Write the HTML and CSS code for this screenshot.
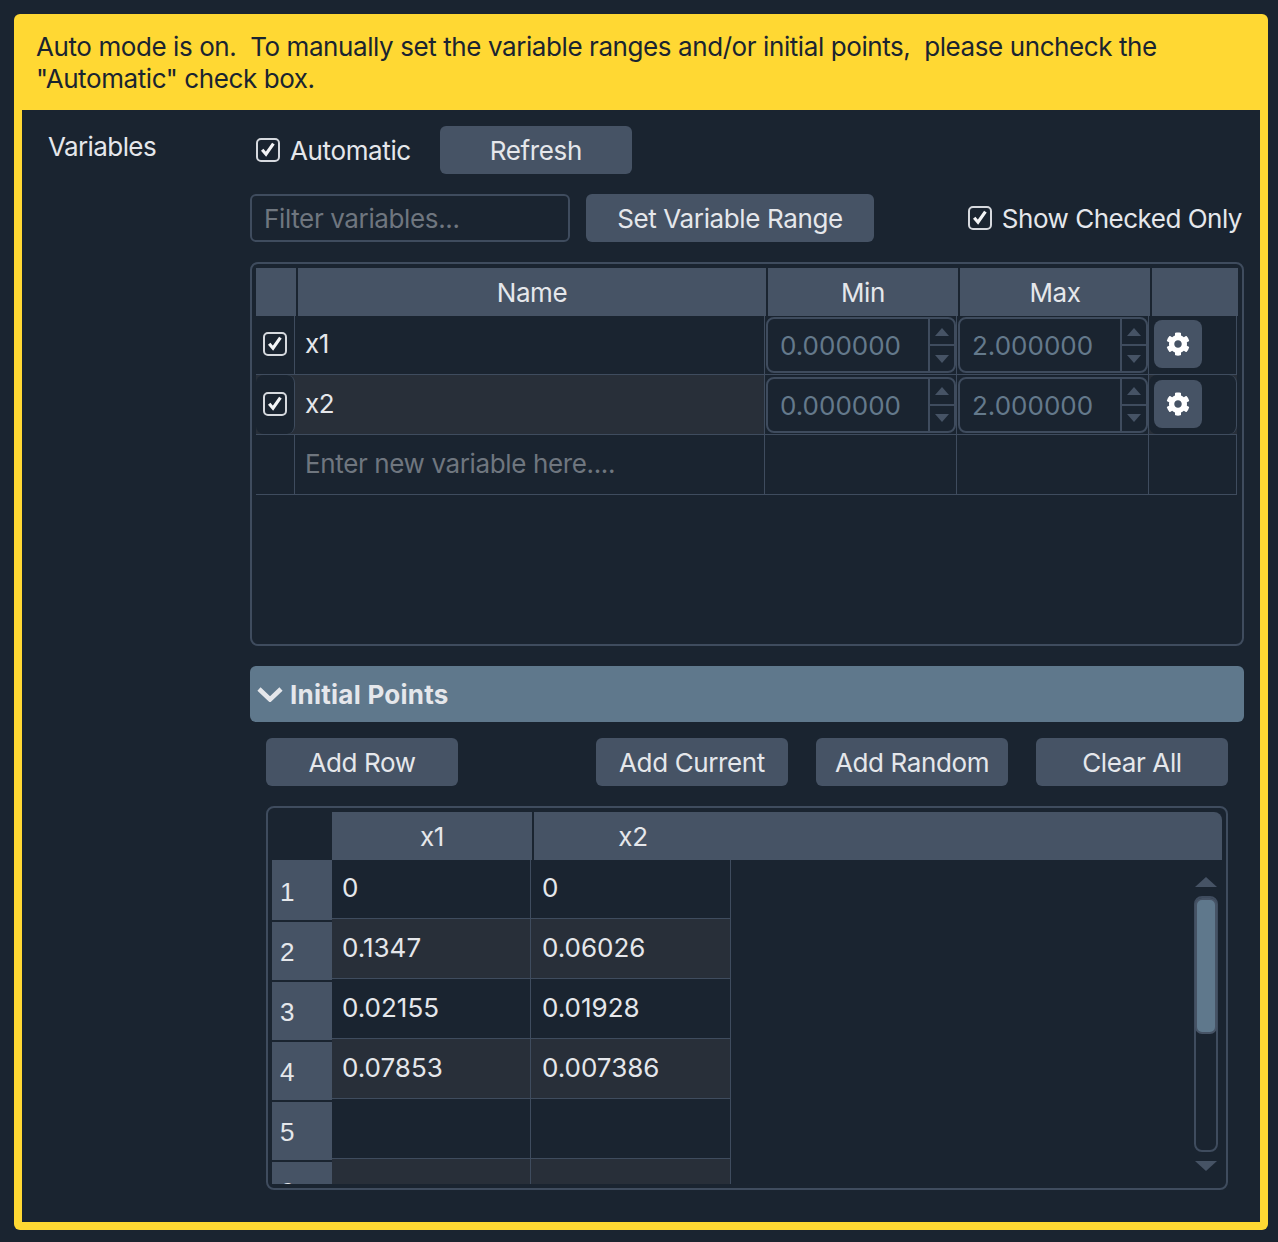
FILE: index.html
```html
<!DOCTYPE html>
<html lang="en">
<head>
  <meta charset="UTF-8">
  <title>Variables</title>
  <link rel="stylesheet" href="styles.css">
</head>
<body>
  <svg class="defs" width="0" height="0">
    <symbol id="tick" viewBox="0 0 20 20">
      <path d="M4.2 9.8L8 14.2 15.4 3.6" fill="none" stroke="#f3f4f6" stroke-width="3.2"/>
    </symbol>
    <symbol id="cog" viewBox="0 0 512 512">
      <path fill="#fff" d="M487.4 315.7l-42.6-24.6c4.3-23.2 4.3-47 0-70.2l42.6-24.6c4.9-2.8 7.1-8.6 5.5-14-11.1-35.6-30-67.8-54.7-94.6-3.8-4.1-10-5.1-14.8-2.3L380.8 110c-17.9-15.4-38.5-27.3-60.8-35.1V25.8c0-5.6-3.9-10.5-9.4-11.7-36.7-8.2-74.3-7.8-109.2 0-5.5 1.2-9.4 6.1-9.4 11.7V75c-22.2 7.9-42.8 19.8-60.8 35.1L88.7 85.5c-4.9-2.8-11-1.9-14.8 2.3-24.7 26.7-43.6 58.9-54.7 94.6-1.7 5.4.6 11.2 5.5 14L67.3 221c-4.3 23.2-4.3 47 0 70.2l-42.6 24.6c-4.9 2.8-7.1 8.6-5.5 14 11.1 35.6 30 67.8 54.7 94.6 3.8 4.1 10 5.1 14.8 2.3l42.6-24.6c17.9 15.4 38.5 27.3 60.8 35.1v49.2c0 5.6 3.9 10.5 9.4 11.7 36.7 8.2 74.3 7.8 109.2 0 5.5-1.2 9.4-6.1 9.4-11.7v-49.2c22.2-7.9 42.8-19.8 60.8-35.1l42.6 24.6c4.9 2.8 11 1.9 14.8-2.3 24.7-26.7 43.6-58.9 54.7-94.6 1.5-5.5-.7-11.3-5.6-14.1zM256 336c-44.1 0-80-35.9-80-80s35.9-80 80-80 80 35.9 80 80-35.9 80-80 80z"/>
    </symbol>
  </svg>

  <div class="panel">
    <div class="notice">Auto mode is on.  To manually set the variable ranges and/or initial points,  please uncheck the
"Automatic" check box.</div>

    <div class="content">
      <div class="side-label">Variables</div>

      <div class="main">
        <div class="row-auto">
          <label class="check"><span class="box"><svg><use href="#tick"/></svg></span>Automatic</label>
          <button class="btn btn-refresh">Refresh</button>
        </div>

        <div class="row-filter">
          <input class="filter" type="text" placeholder="Filter variables...">
          <button class="btn btn-range">Set Variable Range</button>
          <label class="check check-right"><span class="box"><svg><use href="#tick"/></svg></span>Show Checked Only</label>
        </div>

        <div class="var-table">
          <div class="var-head">
            <div class="hcell"></div>
            <div class="hcell">Name</div>
            <div class="hcell">Min</div>
            <div class="hcell">Max</div>
            <div class="hcell"></div>
          </div>

          <div class="var-row">
            <div class="vcell vcell-check"><span class="box"><svg><use href="#tick"/></svg></span></div>
            <div class="vcell vcell-name">x1</div>
            <div class="vcell vcell-spin">
              <div class="spin"><span class="spin-val">0.000000</span><span class="spin-btns"><i class="up"></i><i class="down"></i></span></div>
            </div>
            <div class="vcell vcell-spin">
              <div class="spin"><span class="spin-val">2.000000</span><span class="spin-btns"><i class="up"></i><i class="down"></i></span></div>
            </div>
            <div class="vcell vcell-gear"><button class="gear"><svg><use href="#cog"/></svg></button></div>
          </div>

          <div class="var-row var-row-alt">
            <div class="vcell vcell-check"><span class="box"><svg><use href="#tick"/></svg></span></div>
            <div class="vcell vcell-name">x2</div>
            <div class="vcell vcell-spin">
              <div class="spin"><span class="spin-val">0.000000</span><span class="spin-btns"><i class="up"></i><i class="down"></i></span></div>
            </div>
            <div class="vcell vcell-spin">
              <div class="spin"><span class="spin-val">2.000000</span><span class="spin-btns"><i class="up"></i><i class="down"></i></span></div>
            </div>
            <div class="vcell vcell-gear"><button class="gear"><svg><use href="#cog"/></svg></button></div>
          </div>

          <div class="var-row">
            <div class="vcell"></div>
            <div class="vcell vcell-name vcell-new">Enter new variable here....</div>
            <div class="vcell"></div>
            <div class="vcell"></div>
            <div class="vcell"></div>
          </div>
        </div>

        <div class="section-bar">
          <svg class="chevron" viewBox="0 0 26 16"><path d="M2 3l11 10.5L24 3" fill="none" stroke="#e5e7eb" stroke-width="4.6"/></svg>
          <span>Initial Points</span>
        </div>

        <div class="points">
          <div class="row-points">
            <button class="btn btn-point">Add Row</button>
            <div class="points-right">
              <button class="btn btn-point">Add Current</button>
              <button class="btn btn-point">Add Random</button>
              <button class="btn btn-point">Clear All</button>
            </div>
          </div>

          <div class="pt-table">
            <div class="pt-head">
              <div class="pt-corner"></div>
              <div class="hcell">x1</div>
              <div class="hcell hcell-x2">x2</div>
            </div>
            <div class="pt-body">
              <div class="pt-row"><div class="pt-num">1</div><div class="pt-cell">0</div><div class="pt-cell">0</div></div>
              <div class="pt-row pt-row-alt"><div class="pt-num">2</div><div class="pt-cell">0.1347</div><div class="pt-cell">0.06026</div></div>
              <div class="pt-row"><div class="pt-num">3</div><div class="pt-cell">0.02155</div><div class="pt-cell">0.01928</div></div>
              <div class="pt-row pt-row-alt"><div class="pt-num">4</div><div class="pt-cell">0.07853</div><div class="pt-cell">0.007386</div></div>
              <div class="pt-row"><div class="pt-num">5</div><div class="pt-cell"></div><div class="pt-cell"></div></div>
              <div class="pt-row pt-row-alt"><div class="pt-num">6</div><div class="pt-cell"></div><div class="pt-cell"></div></div>
            </div>
            <div class="scrollbar">
              <i class="sb-up"></i>
              <div class="sb-track"><div class="sb-thumb"></div></div>
              <i class="sb-down"></i>
            </div>
          </div>
        </div>
      </div>
    </div>
  </div>
</body>
</html>
```

FILE: styles.css
```css
* {
  box-sizing: border-box;
}
body {
  margin: 0;
  padding: 14px 10px 12px 14px;
  background: #1a2430;
  color: #e5e7eb;
  font-family: Inter, "Noto Sans", sans-serif;
  font-size: 26px;
  letter-spacing: -0.37px;
}
.defs {
  position: absolute;
}
.panel {
  background: #ffd833;
  border-radius: 6px;
  padding: 0 8px 8px;
}
.notice {
  color: #1a2430;
  padding: 17px 14px 0;
  line-height: 32px;
  height: 96px;
  white-space: pre-wrap;
  letter-spacing: -0.415px;
}
.content {
  background: #1a2430;
  display: flex;
  height: 1112px;
  padding: 16px 16px 0 26px;
}
.side-label {
  width: 202px;
  line-height: 42px;
  flex-shrink: 0;
  letter-spacing: -0.6px;
}
.main {
  width: 994px;
}

/* top rows */
.row-auto {
  display: flex;
  align-items: center;
  height: 48px;
  padding-left: 6px;
}
.check {
  display: flex;
  align-items: center;
  gap: 10px;
}
.box {
  display: block;
  width: 24px;
  height: 24px;
  border: 2px solid #d6d9de;
  border-radius: 5px;
}
.box svg {
  display: block;
  width: 20px;
  height: 20px;
}
.btn {
  background: #465365;
  color: #e5e7eb;
  border: none;
  border-radius: 6px;
  height: 48px;
  font: inherit;
  letter-spacing: inherit;
  padding: 0;
}
.btn-refresh {
  width: 192px;
  margin-left: 29px;
}
.row-filter {
  display: flex;
  align-items: center;
  height: 48px;
  margin-top: 20px;
}
.filter {
  width: 320px;
  height: 48px;
  background: #1a2430;
  border: 2px solid #3f4c5e;
  border-radius: 6px;
  padding: 0 12px;
  font: inherit;
  letter-spacing: inherit;
  color: #e5e7eb;
}
.filter::placeholder {
  color: #6f767f;
  opacity: 1;
}
.btn-range {
  width: 288px;
  margin-left: 16px;
}
.check-right {
  margin-left: auto;
  margin-right: 2px;
  letter-spacing: -0.49px;
}

/* variable table */
.var-table {
  height: 384px;
  margin-top: 20px;
  border: 2px solid #3f4c5e;
  border-radius: 8px;
  padding: 4px 4px 0;
}
.var-head {
  display: grid;
  grid-template-columns: 40px 468px 190px 190px 86px;
  gap: 2px;
  height: 48px;
}
.hcell {
  background: #465365;
  text-align: center;
  height: 48px;
  padding-top: 1px;
  line-height: 48px;
}
.var-row {
  display: grid;
  grid-template-columns: 39px 470px 192px 192px 88px;
  height: 60px;
  border-bottom: 1px solid #3f4c5e;
  width: 981px;
}
.var-head + .var-row {
  height: 59px;
}
.var-head + .var-row .vcell-name {
  padding-bottom: 3px;
}
.vcell {
  border-right: 1px solid #3f4c5e;
  display: flex;
  align-items: center;
  min-width: 0;
}
.vcell-check {
  justify-content: center;
  padding-bottom: 2px;
}
.vcell-name {
  padding: 0 0 2px 10px;
}
.vcell-new {
  color: #6f767f;
}
.var-row-alt {
  background: #282f39;
}
.var-row-alt .vcell-check,
.var-row-alt .vcell-gear {
  background: #1a2430;
  border-radius: 8px;
}
.var-row-alt .vcell-spin {
  background: #1a2430;
}
.vcell-spin {
  padding: 1px 0 1px 1px;
}
.vcell-gear {
  padding: 0 0 2px 5px;
}
.spin {
  flex: 1;
  height: 56px;
  display: flex;
  border: 2px solid #3f4c5e;
  border-radius: 8px;
  overflow: hidden;
  background: #1a2430;
}
.spin-val {
  flex: 1;
  padding-left: 12px;
  line-height: 54px;
  color: #64798b;
  letter-spacing: 0;
}
.spin-btns {
  width: 26px;
  border-left: 2px solid #3f4c5e;
  display: flex;
  flex-direction: column;
}
.spin-btns i {
  flex: 1;
  display: flex;
  align-items: center;
  justify-content: center;
}
.spin-btns .down {
  border-top: 2px solid #3f4c5e;
}
.spin-btns i::after {
  content: "";
  border-left: 7px solid transparent;
  border-right: 7px solid transparent;
}
.spin-btns .up::after {
  border-bottom: 8px solid #465365;
}
.spin-btns .down::after {
  border-top: 8px solid #465365;
}
.gear {
  width: 48px;
  height: 48px;
  background: #465365;
  border: none;
  border-radius: 8px;
  padding: 0;
  display: flex;
  align-items: center;
  justify-content: center;
}
.gear svg {
  width: 24px;
  height: 24px;
}

/* initial points */
.section-bar {
  height: 56px;
  margin-top: 20px;
  background: #5f788c;
  border-radius: 6px;
  display: flex;
  align-items: center;
  gap: 7px;
  padding-left: 7px;
  font-weight: 700;
  letter-spacing: 0.25px;
  color: #e5e7eb;
}
.chevron {
  width: 26px;
  height: 16px;
}
.points {
  padding: 16px 16px 0;
}
.row-points {
  display: flex;
  justify-content: space-between;
}
.points-right {
  display: flex;
  gap: 28px;
}
.btn-point {
  width: 192px;
}
.pt-table {
  position: relative;
  height: 384px;
  margin-top: 20px;
  border: 2px solid #3f4c5e;
  border-radius: 8px;
  padding: 4px;
  overflow: hidden;
}
.pt-head {
  display: grid;
  grid-template-columns: 60px 200px 1fr;
  height: 48px;
}
.hcell-x2 {
  margin-left: 2px;
  border-top-right-radius: 8px;
  padding-right: 490px;
}
.pt-body {
  height: 324px;
  overflow: hidden;
}
.pt-row {
  display: grid;
  grid-template-columns: 60px 199px 200px;
  height: 60px;
  width: 459px;
}
.pt-row:first-child {
  height: 59px;
}
.pt-row:first-child .pt-cell {
  line-height: 56px;
}
/* row numbers sit 2px lower than the cell lines, with a dark gap between */
.pt-num {
  align-self: start;
  height: 58px;
  margin: 3px 0 -1px;
  background: #465365;
  font-family: "Liberation Sans", Arial, sans-serif;
  letter-spacing: 0;
  padding: 15px 0 0 8px;
  line-height: 30px;
}
.pt-row:first-child .pt-num {
  height: 60px;
  margin-top: 0;
  padding-top: 17px;
}
.pt-cell {
  border-right: 1px solid #3f4c5e;
  border-bottom: 1px solid #3f4c5e;
  padding-left: 10px;
  line-height: 58px;
  letter-spacing: 0;
}
.pt-cell:last-child {
  padding-left: 11px;
}
.pt-row-alt .pt-cell {
  background: #282f39;
}

/* fake scrollbar over the table */
.scrollbar {
  position: absolute;
  top: 69px;
  right: 8px;
  width: 24px;
  height: 296px;
  display: flex;
  flex-direction: column;
  align-items: center;
}
.sb-up, .sb-down {
  display: block;
  border-left: 11px solid transparent;
  border-right: 11px solid transparent;
}
.sb-up {
  border-bottom: 10px solid #465365;
}
.sb-down {
  border-top: 10px solid #465365;
  margin-top: 9px;
}
.sb-track {
  width: 24px;
  height: 256px;
  margin-top: 9px;
  border: 2px solid #3f4c5e;
  border-radius: 8px;
}
.sb-thumb {
  height: 136px;
  background: #5f788c;
  border: 2px solid #465365;
  border-radius: 7px;
  margin: 0 -1px;
}
```
